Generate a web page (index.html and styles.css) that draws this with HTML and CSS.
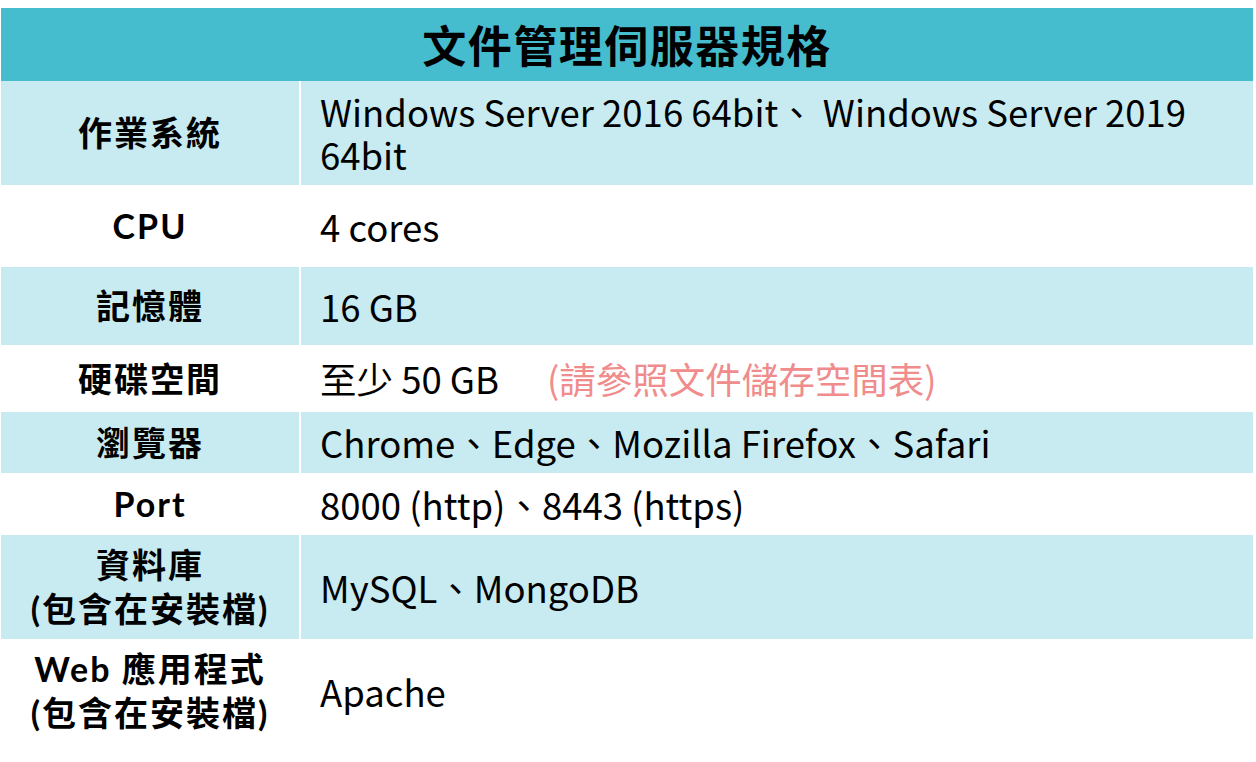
FILE: index.html
```html
<!DOCTYPE html>
<html lang="zh-Hant">
<head>
<meta charset="utf-8">
<title>文件管理伺服器規格</title>
<link rel="stylesheet" href="styles.css">
</head>
<body>
<div class="spec">
  <div class="title">文件管理伺服器規格</div>

  <div class="k blue">作業系統</div>
  <div class="v blue">Windows Server 2016 64bit、 Windows Server 2019 64bit</div>

  <div class="k">CPU</div>
  <div class="v">4 cores</div>

  <div class="k blue">記憶體</div>
  <div class="v blue">16 GB</div>

  <div class="k">硬碟空間</div>
  <div class="v">至少 50 GB<span class="note">(請參照文件儲存空間表)</span></div>

  <div class="k blue">瀏覽器</div>
  <div class="v blue">Chrome、Edge、Mozilla Firefox、Safari</div>

  <div class="k">Port</div>
  <div class="v">8000 (http)、8443 (https)</div>

  <div class="k blue"><span class="line">資料庫</span><span class="line">(包含在安裝檔)</span></div>
  <div class="v blue">MySQL、MongoDB</div>

  <div class="k"><span class="line">Web 應用程式</span><span class="line">(包含在安裝檔)</span></div>
  <div class="v">Apache</div>
</div>
</body>
</html>
```

FILE: styles.css
```css
* { box-sizing: border-box; }
html, body { margin: 0; padding: 0; background: #ffffff; }
body {
  font-family: "Noto Sans CJK TC", "Noto Sans", sans-serif;
  color: #000000;
}
.spec {
  margin: 8px 0 0 1px;
  width: 1252px;
  display: grid;
  grid-template-columns: 298px 1fr;
  grid-template-rows: 73px 104px 82px 78px 67px 61px 62px 104px 104px;
  column-gap: 2px;
  background: #ffffff;
}
.title {
  grid-column: 1 / 3;
  background: #46bccf;
  display: flex;
  align-items: center;
  justify-content: center;
  font-size: 44px;
  font-weight: 700;
  letter-spacing: 1.5px;
  padding-bottom: 1px;
}
.k, .v {
  display: flex;
  align-items: center;
}
.k {
  flex-direction: column;
  justify-content: center;
  text-align: center;
  font-family: Lato, "Noto Sans CJK TC", sans-serif;
  font-size: 34px;
  line-height: 44px;
  font-weight: 700;
  letter-spacing: 2px;
}
.line { display: block; }
.v {
  padding-left: 19px;
  font-size: 36.5px;
  line-height: 43px;
  font-weight: 400;
}
.blue { background: #c8ebf1; }
.note {
  color: #f08c8c;
  margin-left: 48px;
}
```
